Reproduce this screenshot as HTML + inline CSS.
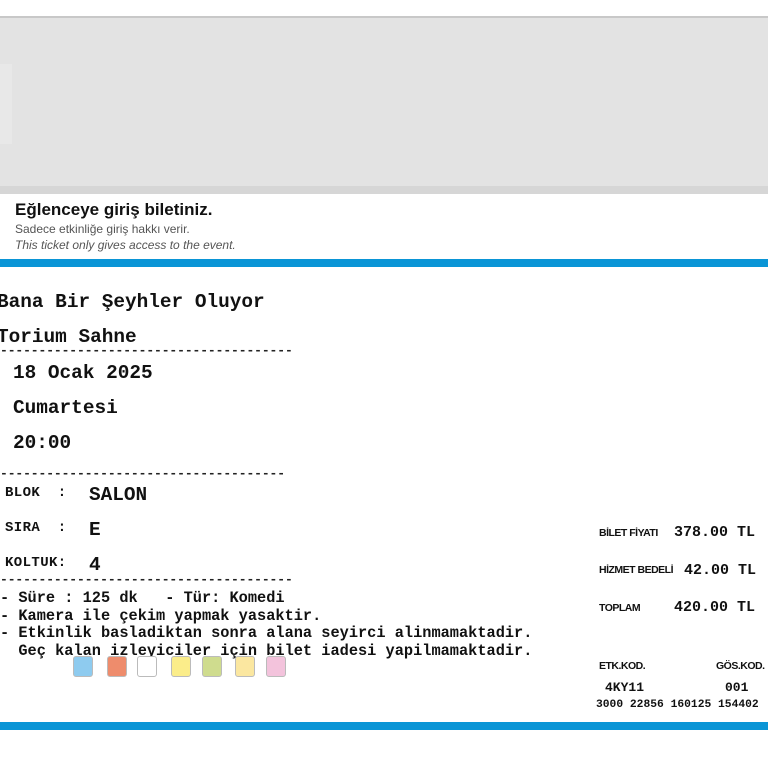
<!DOCTYPE html>
<html><head><meta charset="utf-8"><style>
*{margin:0;padding:0;box-sizing:border-box}
body{width:768px;height:768px;background:#fff;position:relative;overflow:hidden;font-family:"Liberation Mono",monospace;font-weight:bold;color:#111}
.a{position:absolute;white-space:pre}
.s{font-family:"Liberation Sans",sans-serif}
.m{font-size:19.4px}
.d{font-size:13px;letter-spacing:-0.1px;color:#222}
.l{font-size:14px;letter-spacing:0.4px}
.b{font-size:15.3px}
.r{font-family:"Liberation Sans",sans-serif;font-size:10.5px;letter-spacing:-0.5px}
.sw{position:absolute;top:656px;width:20px;height:21px;border:1px solid #bbb;border-radius:3px}
</style></head><body>
<div style="position:absolute;left:0;top:16px;width:768px;height:2px;background:#c8c8c8"></div>
<div style="position:absolute;left:0;top:18px;width:768px;height:174px;background:#e3e3e3"></div>
<div style="position:absolute;left:0;top:186px;width:768px;height:8px;background:#d6d6d6"></div>
<div style="position:absolute;left:0;top:64px;width:12px;height:80px;background:#e8e8e8"></div>
<div class="a s" style="left:15px;top:200px;font-size:17px;font-weight:bold;color:#111">Eğlenceye giriş biletiniz.</div>
<div class="a s" style="left:15px;top:222px;font-size:12px;font-weight:normal;color:#555">Sadece etkinliğe giriş hakkı verir.</div>
<div class="a s" style="left:15px;top:238px;font-size:12px;font-weight:normal;font-style:italic;color:#555">This ticket only gives access to the event.</div>
<div style="position:absolute;left:0;top:259px;width:768px;height:8px;background:#0a95d6"></div>
<div class="a m" style="left:-3px;top:291px">Bana Bir Şeyhler Oluyor</div>
<div class="a m" style="left:-3px;top:326px">Torium Sahne</div>
<div class="a d" style="left:0;top:343px">--------------------------------------</div>
<div class="a m" style="left:13px;top:362px">18 Ocak 2025</div>
<div class="a m" style="left:13px;top:397px">Cumartesi</div>
<div class="a m" style="left:13px;top:432px">20:00</div>
<div class="a d" style="left:0;top:466px">-------------------------------------</div>
<div class="a l" style="left:5px;top:485px">BLOK  :</div>
<div class="a m" style="left:89px;top:484px">SALON</div>
<div class="a l" style="left:5px;top:520px">SIRA  :</div>
<div class="a m" style="left:89px;top:519px">E</div>
<div class="a l" style="left:5px;top:555px">KOLTUK:</div>
<div class="a m" style="left:89px;top:554px">4</div>
<div class="a d" style="left:0;top:572px">--------------------------------------</div>
<div class="a b" style="left:0;top:589px">- Süre : 125 dk   - Tür: Komedi</div>
<div class="a b" style="left:0;top:607px">- Kamera ile çekim yapmak yasaktir.</div>
<div class="a b" style="left:0;top:624px">- Etkinlik basladiktan sonra alana seyirci alinmamaktadir.</div>
<div class="a b" style="left:0;top:642px">  Geç kalan izleyiciler için bilet iadesi yapilmamaktadir.</div>
<div class="sw" style="left:73px;background:#8ecbef"></div>
<div class="sw" style="left:107px;background:#ee8c6c"></div>
<div class="sw" style="left:137px;background:#fff"></div>
<div class="sw" style="left:171px;background:#fbed8a"></div>
<div class="sw" style="left:202px;background:#cfdc8e"></div>
<div class="sw" style="left:235px;background:#fbe7a0"></div>
<div class="sw" style="left:266px;background:#f3c3dc"></div>
<div class="a r" style="left:599px;top:527px">BİLET FİYATI</div>
<div class="a" style="left:674px;top:524px;font-size:15px">378.00 TL</div>
<div class="a r" style="left:599px;top:564px">HİZMET BEDELİ</div>
<div class="a" style="left:684px;top:562px;font-size:15px">42.00 TL</div>
<div class="a r" style="left:599px;top:602px">TOPLAM</div>
<div class="a" style="left:674px;top:599px;font-size:15px">420.00 TL</div>
<div class="a r" style="left:599px;top:660px">ETK.KOD.</div>
<div class="a r" style="left:716px;top:660px">GÖS.KOD.</div>
<div class="a" style="left:605px;top:680px;font-size:13px">4KY11</div>
<div class="a" style="left:725px;top:680px;font-size:13px">001</div>
<div class="a" style="left:596px;top:699px;font-size:11.3px">3000 22856 160125 154402</div>
<div style="position:absolute;left:0;top:722px;width:768px;height:8px;background:#0a95d6"></div>
</body></html>
